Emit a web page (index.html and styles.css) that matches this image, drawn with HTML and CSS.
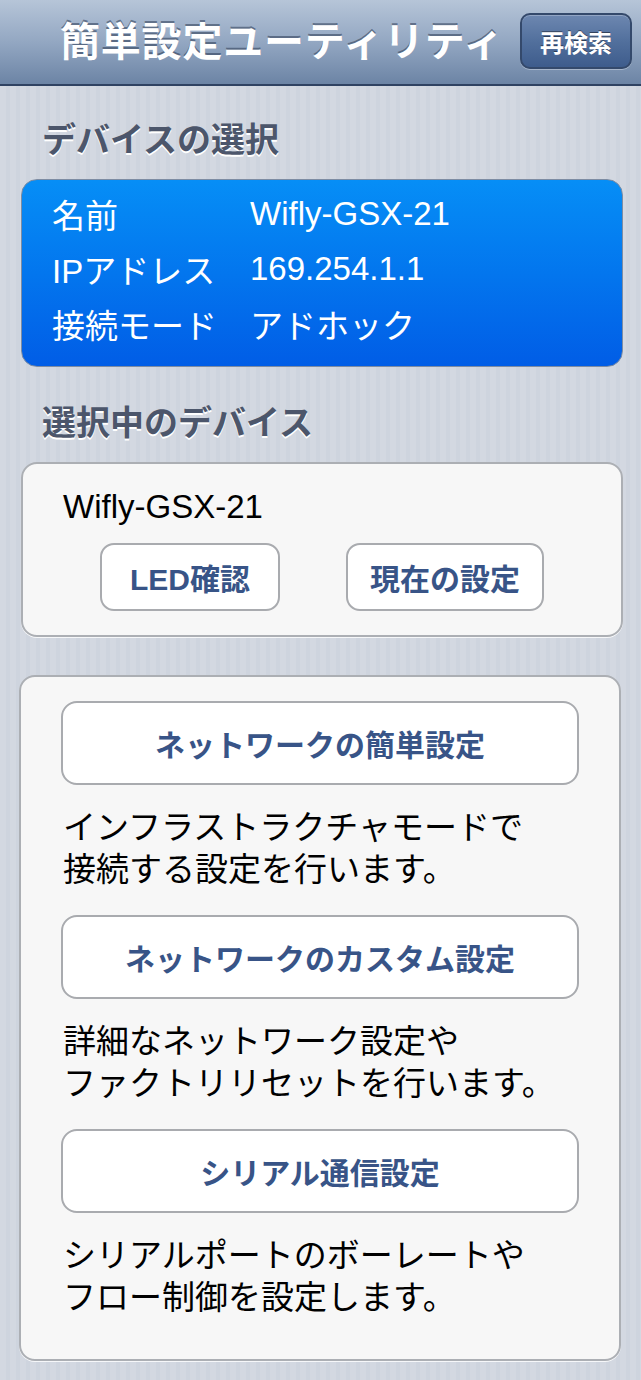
FILE: index.html
```html
<!DOCTYPE html>
<html lang="ja">
<head>
<meta charset="utf-8">
<title>簡単設定ユーティリティ</title>
<link rel="stylesheet" href="styles.css">
</head>
<body>
<header class="navbar">
  <h1 class="nav-title">簡単設定ユーティリティ</h1>
  <button class="nav-btn">再検索</button>
</header>
<main class="content">
  <h2 class="section-title">デバイスの選択</h2>
  <div class="device-card">
    <div class="row"><span class="label">名前</span><span class="value">Wifly-GSX-21</span></div>
    <div class="row"><span class="label">IPアドレス</span><span class="value">169.254.1.1</span></div>
    <div class="row"><span class="label">接続モード</span><span class="value">アドホック</span></div>
  </div>

  <h2 class="section-title second">選択中のデバイス</h2>
  <div class="card selected">
    <div class="device-name">Wifly-GSX-21</div>
    <div class="btn-row">
      <button class="btn small led">LED確認</button>
      <button class="btn small current">現在の設定</button>
    </div>
  </div>

  <div class="card actions">
    <button class="btn wide">ネットワークの簡単設定</button>
    <p class="desc">インフラストラクチャモードで<br>接続する設定を行います。</p>
    <button class="btn wide">ネットワークのカスタム設定</button>
    <p class="desc">詳細なネットワーク設定や<br>ファクトリリセットを行います。</p>
    <button class="btn wide">シリアル通信設定</button>
    <p class="desc last">シリアルポートのボーレートや<br>フロー制御を設定します。</p>
  </div>
</main>
</body>
</html>
```

FILE: styles.css
```css
* { box-sizing: border-box; }
html, body { margin: 0; padding: 0; }
body {
  width: 641px;
  min-height: 1380px;
  font-family: "Liberation Sans", "Noto Sans CJK JP", sans-serif;
  background: repeating-linear-gradient(90deg, #d3d8e1 0 6px, #ced4de 6px 10px);
}
button { font-family: inherit; cursor: pointer; }

.navbar {
  height: 86px;
  display: flex;
  align-items: center;
  padding: 0 9px 0 60px;
  background: linear-gradient(#b6c5d8 0%, #93a7c2 50%, #6c84a5 100%);
  border-bottom: 2px solid #2f4262;
}
.nav-title {
  margin: 0;
  font-size: 40px;
  font-weight: 700;
  line-height: 48px;
  color: #fff;
  text-shadow: 0 -2px 0 rgba(40, 55, 80, 0.55);
  letter-spacing: 0.8px;
}
.nav-btn {
  margin-left: auto;
  width: 112px;
  height: 56px;
  margin-top: -2px;
  border-radius: 10px;
  border: 2px solid #34496b;
  background: linear-gradient(#6d87b0 0%, #52709d 50%, #3e5c8c 100%);
  box-shadow: inset 0 1px 0 rgba(255,255,255,0.25), 0 1px 0 rgba(255,255,255,0.35);
  color: #fff;
  font-size: 24px;
  font-weight: 700;
  text-shadow: 0 -1px 0 rgba(0,0,0,0.45);
  padding: 0;
}

.content {
  padding: 34px 18px 19px 21px;
}
.section-title {
  margin: 0 0 19px 21px;
  font-size: 34px;
  line-height: 40px;
  font-weight: 700;
  color: #4c566b;
  text-shadow: 0 2px 0 #fff;
}
.section-title.second { margin-top: 36px; }

.device-card {
  border-radius: 16px;
  border: 1px solid #7d8ca3;
  background: linear-gradient(#068ef6 0%, #0376ee 50%, #015de6 100%);
  padding: 6px 0 15px 30px;
  color: #fff;
}
.row {
  display: flex;
  height: 55px;
  align-items: center;
  font-size: 33px;
}
.label { width: 198px; flex: none; }

.card {
  background: #f7f7f7;
  border: 2px solid #acafb4;
  border-radius: 16px;
  box-shadow: 0 1px 0 rgba(255,255,255,0.8);
}
.selected {
  padding: 23px 0 24px;
}
.device-name {
  padding-left: 40px;
  font-size: 33px;
  line-height: 40px;
  color: #000;
}
.btn-row {
  margin-top: 16px;
  display: flex;
  justify-content: center;
  gap: 66px;
}
.btn {
  background: #fff;
  border: 2px solid #a9abaf;
  color: #385487;
  font-weight: 700;
  font-size: 30px;
  padding: 0;
}
.btn.small {
  height: 68px;
  border-radius: 14px;
}
.btn.led { width: 180px; }
.btn.current { width: 198px; }

.actions {
  margin-top: 38px;
  margin-left: -2px;
  margin-right: 2px;
  padding: 24px 40px 40px 40px;
}
.btn.wide {
  display: block;
  width: 100%;
  height: 84px;
  border-radius: 16px;
  margin-bottom: 22px;
}
.desc {
  margin: 0 0 24px 2px;
  font-size: 33px;
  line-height: 42px;
  color: #000;
  white-space: nowrap;
}
.desc.last { margin-bottom: 0; }
```
